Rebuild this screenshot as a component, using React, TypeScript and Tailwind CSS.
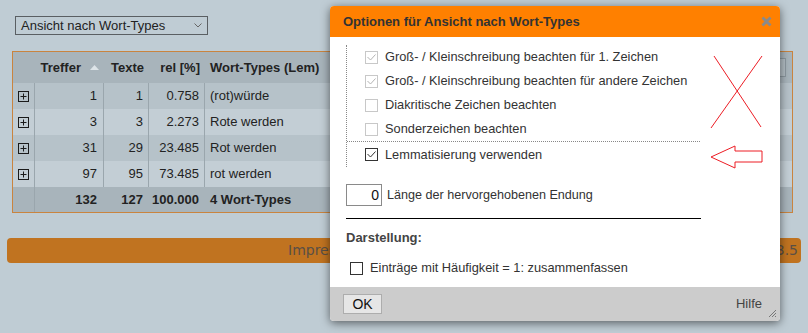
import type { ReactNode } from "react";

type Row = { hits: number; texts: number; rel: string; type: string };

const rows: Row[] = [
  { hits: 1, texts: 1, rel: "0.758", type: "(rot)würde" },
  { hits: 3, texts: 3, rel: "2.273", type: "Rote werden" },
  { hits: 31, texts: 29, rel: "23.485", type: "Rot werden" },
  { hits: 97, texts: 95, rel: "73.485", type: "rot werden" },
];

function ExpandIcon() {
  return (
    <svg width="11" height="11" viewBox="0 0 11 11" className="block">
      <rect x="0.5" y="0.5" width="10" height="10" fill="none" stroke="#1a1a1a" />
      <path d="M2.5 5.5 H8.5 M5.5 2.5 V8.5" stroke="#1a1a1a" />
    </svg>
  );
}

function Checkbox({ checked, disabled }: { checked?: boolean; disabled?: boolean }) {
  const border = disabled ? "#c8c8c8" : "#333";
  const mark = disabled ? "#b4b4b4" : "#333";
  return (
    <svg width="13" height="13" viewBox="0 0 13 13" className="block shrink-0">
      <rect x="0.5" y="0.5" width="12" height="12" fill="#fff" stroke={border} />
      {checked && <path d="M2.5 6 L5.5 9 L10.5 3.5" fill="none" stroke={mark} />}
    </svg>
  );
}

function Option({ label, checked, disabled }: { label: string; checked?: boolean; disabled?: boolean }) {
  return (
    <div className="flex items-center gap-[7px] h-[24px] pl-[18px]">
      <Checkbox checked={checked} disabled={disabled} />
      <span className="text-[12.8px] text-[#333] whitespace-nowrap">{label}</span>
    </div>
  );
}

function Cell({ children, className = "" }: { children?: ReactNode; className?: string }) {
  return <div className={`flex items-center ${className}`}>{children}</div>;
}

export default function App() {
  return (
    <div className="relative w-[808px] h-[333px] overflow-hidden bg-[#bfccd4] font-['Liberation_Sans',Arial,sans-serif] text-[13px] text-[#222]">
      {/* view selector */}
      <div className="pt-4 pl-[15px]">
        <div className="w-[193px] h-[19px] border border-[#5a5f63] flex items-center justify-between pl-[5px] pr-[5px]">
          <span className="text-[13px] text-[#222]">Ansicht nach Wort-Types</span>
          <svg width="8" height="5" viewBox="0 0 8 5">
            <path d="M0.5 0.5 L4 4 L7.5 0.5" fill="none" stroke="#666" />
          </svg>
        </div>
      </div>

      {/* result table */}
      <div className="mt-4 ml-[12px] w-[781px] border border-[#c9843f]">
        <div className="grid grid-cols-[21px_69px_45px_56px_1fr] h-[31px] bg-[#a8b4bb] font-bold">
          <Cell />
          <Cell className="justify-end gap-[9px] pr-[4px]">
            <span>Treffer</span>
            <svg width="9" height="5" viewBox="0 0 9 5">
              <path d="M0 5 L4.5 0 L9 5 Z" fill="#dde4e8" />
            </svg>
          </Cell>
          <Cell className="justify-end pr-[4px]">Texte</Cell>
          <Cell className="justify-end pr-[4px]">rel [%]</Cell>
          <Cell className="justify-between pl-[6px] pr-[6px]">
            <span>Wort-Types (Lem)</span>
            <div className="w-[120px] h-[19px] border border-[#8c989f] bg-[#b3bec4]" />
          </Cell>
        </div>
        {rows.map((r, i) => (
          <div
            key={r.type}
            className={`grid grid-cols-[21px_69px_45px_56px_1fr] h-[26px] ${i % 2 === 0 ? "bg-[#b6c2c9]" : "bg-[#c3ced5]"}`}
          >
            <Cell className="justify-center">
              <ExpandIcon />
            </Cell>
            <Cell className="justify-end pr-[6px] border-l border-[#9aa6ad]">{r.hits}</Cell>
            <Cell className="justify-end pr-[5px] border-l border-[#9aa6ad]">{r.texts}</Cell>
            <Cell className="justify-end pr-[5px] border-l border-[#9aa6ad]">{r.rel}</Cell>
            <Cell className="pl-[5px] border-l border-[#9aa6ad]">{r.type}</Cell>
          </div>
        ))}
        <div className="grid grid-cols-[21px_69px_45px_56px_1fr] h-[25px] bg-[#a8b4bb] font-bold">
          <Cell />
          <Cell className="justify-end pr-[6px] border-l border-[#9aa6ad]">132</Cell>
          <Cell className="justify-end pr-[5px]">127</Cell>
          <Cell className="justify-end pr-[5px]">100.000</Cell>
          <Cell className="pl-[6px]">4 Wort-Types</Cell>
        </div>
      </div>

      {/* footer bar */}
      <div className="mt-[25px] mx-[7px] h-[25px] rounded-[4px] bg-[#c07320] flex items-center justify-between pl-[281px] pr-[3px] font-['DejaVu_Sans',Verdana,sans-serif] text-[14px] text-[#5a4f45]">
        <span>Impressum</span>
        <span>3.5</span>
      </div>

      {/* options dialog */}
      <div className="absolute left-[330px] top-[6px] w-[450px] h-[315px] flex flex-col bg-white rounded-[4px] shadow-[0_2px_10px_rgba(0,0,0,0.55)]">
        <div className="h-[31px] shrink-0 flex items-center justify-between pl-[13px] pr-[8px] bg-[#ff8000] rounded-t-[4px]">
          <span className="font-bold text-[13px] text-[#333]">Optionen für Ansicht nach Wort-Types</span>
          <svg width="11" height="11" viewBox="0 0 11 11">
            <path d="M1.5 1.5 L9.5 9.5 M9.5 1.5 L1.5 9.5" stroke="#8a8a8a" strokeWidth="2.8" />
          </svg>
        </div>

        <div className="relative flex-1 px-[16px]">
          <div className="mt-[8px] w-[354px] border-l border-dotted border-[#888]">
            <div className="border-b border-dotted border-[#888]">
              <Option label="Groß- / Kleinschreibung beachten für 1. Zeichen" checked disabled />
              <Option label="Groß- / Kleinschreibung beachten für andere Zeichen" checked disabled />
              <Option label="Diakritische Zeichen beachten" disabled />
              <Option label="Sonderzeichen beachten" disabled />
            </div>
            <div className="h-[25px] flex items-center gap-[7px] pl-[18px]">
              <Checkbox checked />
              <span className="text-[12.8px] text-[#333]">Lemmatisierung verwenden</span>
            </div>
          </div>

          <div className="mt-[17px] flex items-center gap-[5px]">
            <div className="w-[36px] h-[22px] border border-[#8a8a8a] flex items-center justify-end pr-[2px] text-[14px] text-[#111]">
              0
            </div>
            <span className="text-[12.6px] text-[#333]">Länge der hervorgehobenen Endung</span>
          </div>

          <div className="mt-[12px] w-[355px] border-t border-black" />

          <div className="mt-[11px] leading-[15px] font-bold text-[13px] text-[#444]">Darstellung:</div>

          <div className="mt-[14px] ml-[4px] h-[18px] flex items-center gap-[7px]">
            <Checkbox />
            <span className="text-[12.8px] text-[#333]">Einträge mit Häufigkeit = 1: zusammenfassen</span>
          </div>
        </div>

        <div className="relative h-[34px] shrink-0 flex items-center justify-between pl-[13px] pr-[18px] bg-[#cccccc] rounded-b-[4px]">
          <div className="w-[39px] h-[20px] border border-[#adadad] bg-[#e6e6e6] flex items-center justify-center text-[14px] text-[#111]">
            OK
          </div>
          <span className="text-[13px] text-[#444]">Hilfe</span>
          <svg width="9" height="9" viewBox="0 0 9 9" className="absolute right-[3px] bottom-[3px]">
            <path d="M8 1 L1 8 M8 4 L4 8 M8 7 L7 8" stroke="#777" />
          </svg>
        </div>

        {/* red annotations */}
        <svg
          width="450"
          height="315"
          viewBox="0 0 450 315"
          className="absolute inset-0 pointer-events-none"
        >
          <path d="M384 50 L431 121 M432 50 L381 122" stroke="#ed1c24" fill="none" />
          <path
            d="M381 151 L405 140 L405 145 L432 145 L432 156 L405 156 L405 162 Z"
            stroke="#ed1c24"
            fill="none"
          />
        </svg>
      </div>
    </div>
  );
}
